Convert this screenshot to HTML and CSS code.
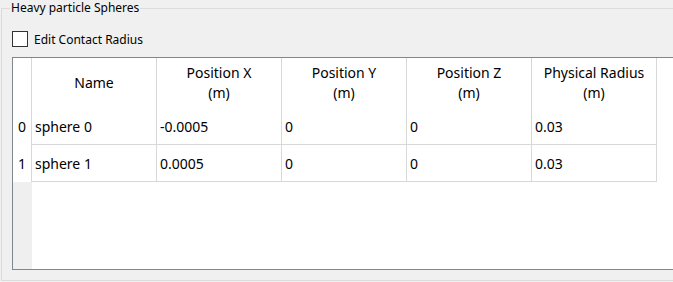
FILE: index.html
```html
<!DOCTYPE html>
<html lang="en">

<head>
    <meta charset="UTF-8">
    <meta name="viewport" content="width=device-width, initial-scale=1.0">
    <title>Heavy particle Spheres</title>
    <link rel="stylesheet" href="styles.css">
</head>

<body>
    <fieldset class="group">
        <legend class="groupTitle">Heavy particle Spheres</legend>

        <label class="check">
            <span class="checkBox"></span>
            <span>Edit Contact Radius</span>
        </label>

        <div class="view">
            <div class="vhead">
                <div class="corner"></div>
                <div class="num">0</div>
                <div class="num">1</div>
            </div>
            <div class="cells">
                <div class="hrow">
                    <div class="hcell">Name</div>
                    <div class="hcell">Position X<br>(m)</div>
                    <div class="hcell">Position Y<br>(m)</div>
                    <div class="hcell">Position Z<br>(m)</div>
                    <div class="hcell">Physical Radius<br>(m)</div>
                </div>
                <div class="row">
                    <div class="cell">sphere 0</div>
                    <div class="cell">-0.0005</div>
                    <div class="cell">0</div>
                    <div class="cell">0</div>
                    <div class="cell">0.03</div>
                </div>
                <div class="row">
                    <div class="cell">sphere 1</div>
                    <div class="cell">0.0005</div>
                    <div class="cell">0</div>
                    <div class="cell">0</div>
                    <div class="cell">0.03</div>
                </div>
            </div>
        </div>
    </fieldset>
</body>

</html>
```

FILE: styles.css
```css
body {
    margin: 0;
    background-color: #f0f0f0;
    font-family: "Noto Sans", sans-serif;
    color: #000000;
    overflow: hidden;
}

/* группа уходит за правый край окна, поэтому без правой рамки */
.group {
    box-sizing: border-box;
    width: 672px;
    margin: 0 0 0 1px;
    padding: 0 0 10px 10px;
    border: 1px solid #dcdcdc;
    border-right: none;
    min-width: 0;
}

.groupTitle {
    margin-left: -2px;
    padding: 0 1px;
    font-size: 12px;
    line-height: 16px;
}

.check {
    display: flex;
    flex-direction: row;
    align-items: center;
    margin-top: 15px;
    height: 16px;
    font-size: 12px;
    user-select: none;
}

.checkBox {
    width: 16px;
    height: 16px;
    box-sizing: border-box;
    border: 1px solid #333333;
    background-color: white;
    margin-right: 6px;
}

.view {
    margin-top: 10px;
    height: 213px;
    box-sizing: border-box;
    border: 1px solid #82868f;
    border-right: none;
    background-color: white;
    display: flex;
    flex-direction: row;
    font-size: 14px;
    overflow: hidden;
}

.vhead {
    width: 19px;
    flex-shrink: 0;
    background-color: #efefef;
    display: flex;
    flex-direction: column;
}

.corner {
    height: 50px;
    background-color: white;
    border-right: 1px solid #d8d8d8;
}

.num {
    height: 37px;
    background-color: white;
    border-right: 1px solid #d8d8d8;
    display: flex;
    align-items: center;
    justify-content: center;
}

.cells {
    display: flex;
    flex-direction: column;
}

.hrow,
.row {
    display: flex;
    flex-direction: row;
}

.hcell {
    width: 125px;
    height: 50px;
    box-sizing: border-box;
    border-right: 1px solid #d8d8d8;
    display: flex;
    align-items: center;
    justify-content: center;
    text-align: center;
    line-height: 20px;
}

.cell {
    width: 125px;
    height: 37px;
    box-sizing: border-box;
    border-right: 1px solid #d8d8d8;
    border-bottom: 1px solid #d8d8d8;
    padding-left: 3px;
    display: flex;
    align-items: center;
}
```
